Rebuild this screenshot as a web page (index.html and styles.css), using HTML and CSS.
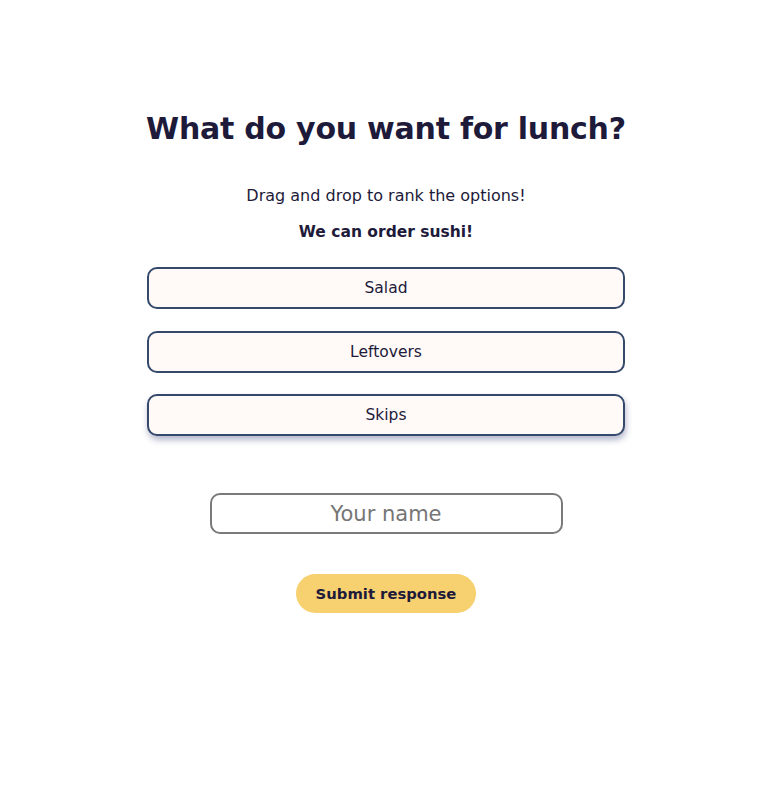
FILE: index.html
```html
<!DOCTYPE html>
<html>
<head>
<meta charset="utf-8">
<link rel="stylesheet" href="styles.css">
</head>
<body>
<main class="poll">
  <h1 class="title">What do you want for lunch?</h1>
  <p class="hint">Drag and drop to rank the options!</p>
  <p class="note">We can order sushi!</p>
  <ul class="options">
    <li class="option">Salad</li>
    <li class="option">Leftovers</li>
    <li class="option option--lifted">Skips</li>
  </ul>
  <input class="name" type="text" placeholder="Your name">
  <button class="submit">Submit response</button>
</main>
</body>
</html>
```
FILE: styles.css
```css
html, body {
  margin: 0;
  padding: 0;
  background: #ffffff;
}
body {
  font-family: "DejaVu Sans", "Noto Sans", sans-serif;
  color: #1d1a3a;
}
.poll {
  width: 478px;
  margin: 0 auto;
  padding-top: 109px;
  display: flex;
  flex-direction: column;
  align-items: center;
}
.title {
  margin: 0;
  font-size: 30px;
  font-weight: bold;
  line-height: 40px;
  letter-spacing: -0.25px;
  white-space: nowrap;
  text-align: center;
}
.hint {
  margin: 36px 0 0;
  font-size: 16px;
  line-height: 22px;
}
.note {
  margin: 14px 0 0;
  font-size: 15.5px;
  font-weight: bold;
  line-height: 22px;
}
.options {
  list-style: none;
  margin: 24px 0 0;
  padding: 0;
  width: 100%;
  display: flex;
  flex-direction: column;
  gap: 22px;
}
.option {
  box-sizing: border-box;
  height: 42px;
  border: 2px solid #34496b;
  border-radius: 10px;
  background: #fffaf7;
  display: flex;
  align-items: center;
  justify-content: center;
  font-size: 15.5px;
  color: #1d1a3a;
}
.option--lifted {
  margin-top: -1px;
  box-shadow: 1px 4px 6px rgba(40, 50, 110, 0.35);
}
.name {
  box-sizing: border-box;
  margin-top: 57px;
  width: 353px;
  height: 41px;
  border: 2px solid #7a7a7a;
  border-radius: 10px;
  background: #fff;
  font-family: inherit;
  font-size: 21px;
  text-align: center;
  color: #1d1a3a;
  outline: none;
}
.name::placeholder {
  color: #767676;
}
.submit {
  margin-top: 40px;
  width: 180px;
  height: 39px;
  border: none;
  border-radius: 20px;
  background: #f7d070;
  font-family: inherit;
  font-size: 14.8px;
  font-weight: bold;
  color: #1d1a3a;
  cursor: pointer;
}
```
